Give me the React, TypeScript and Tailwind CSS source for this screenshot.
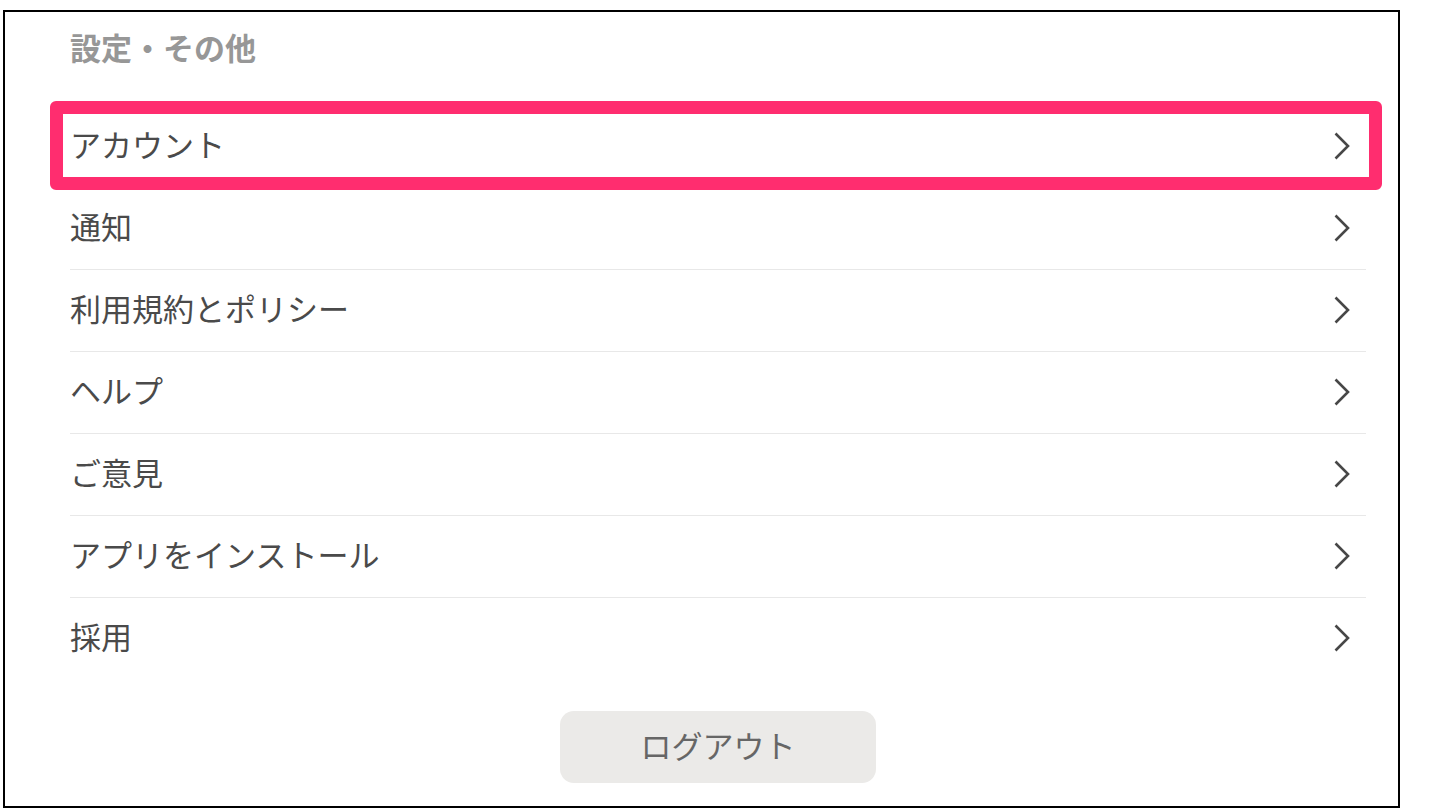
const items = ['アカウント', '通知', '利用規約とポリシー', 'ヘルプ', 'ご意見', 'アプリをインストール', '採用']

function Chevron() {
    return (
        <svg width="16" height="28" viewBox="0 0 16 28" fill="none" className="shrink-0">
            <polyline points="1.5,1.5 14,14 1.5,26.5" stroke="#474747" strokeWidth="2.6" strokeLinejoin="miter" />
        </svg>
    )
}

export default function App() {
    return (
        <div className="min-h-[810px] bg-white pt-[10px] pl-[3px]" style={{ fontFamily: '"Noto Sans CJK JP", "Noto Sans", sans-serif' }}>
            <div className="w-[1397px] h-[798px] border-2 border-black pl-[65px] pr-[32px] pt-[15px]">
                <h2 className="text-[31px] leading-[40px] font-bold text-[#979797]">設定・その他</h2>

                <ul className="mt-[39px]">
                    {items.map((label, i) => (
                        <li
                            key={label}
                            className={`relative h-[82px] flex items-center justify-between text-[31px] text-[#4a4a4a] ${i < items.length - 1 ? 'border-b border-[#e8e8e8]' : ''}`}
                        >
                            <span className="leading-none pb-[7px]">{label}</span>
                            <span className="mr-[16px] pb-[2px]">
                                <Chevron />
                            </span>
                            {i === 0 && (
                                <div className="absolute top-[-5px] bottom-[-3px] left-[-20px] right-[-16px] border-[13px] border-[#ff2d6f] rounded-[6px] pointer-events-none" />
                            )}
                        </li>
                    ))}
                </ul>

                <div className="flex justify-center mt-[31px]">
                    <button className="w-[316px] h-[72px] rounded-[14px] bg-[#ebeae8] text-[31px] text-[#666666] pb-[6px] leading-none">
                        ログアウト
                    </button>
                </div>
            </div>
        </div>
    )
}
